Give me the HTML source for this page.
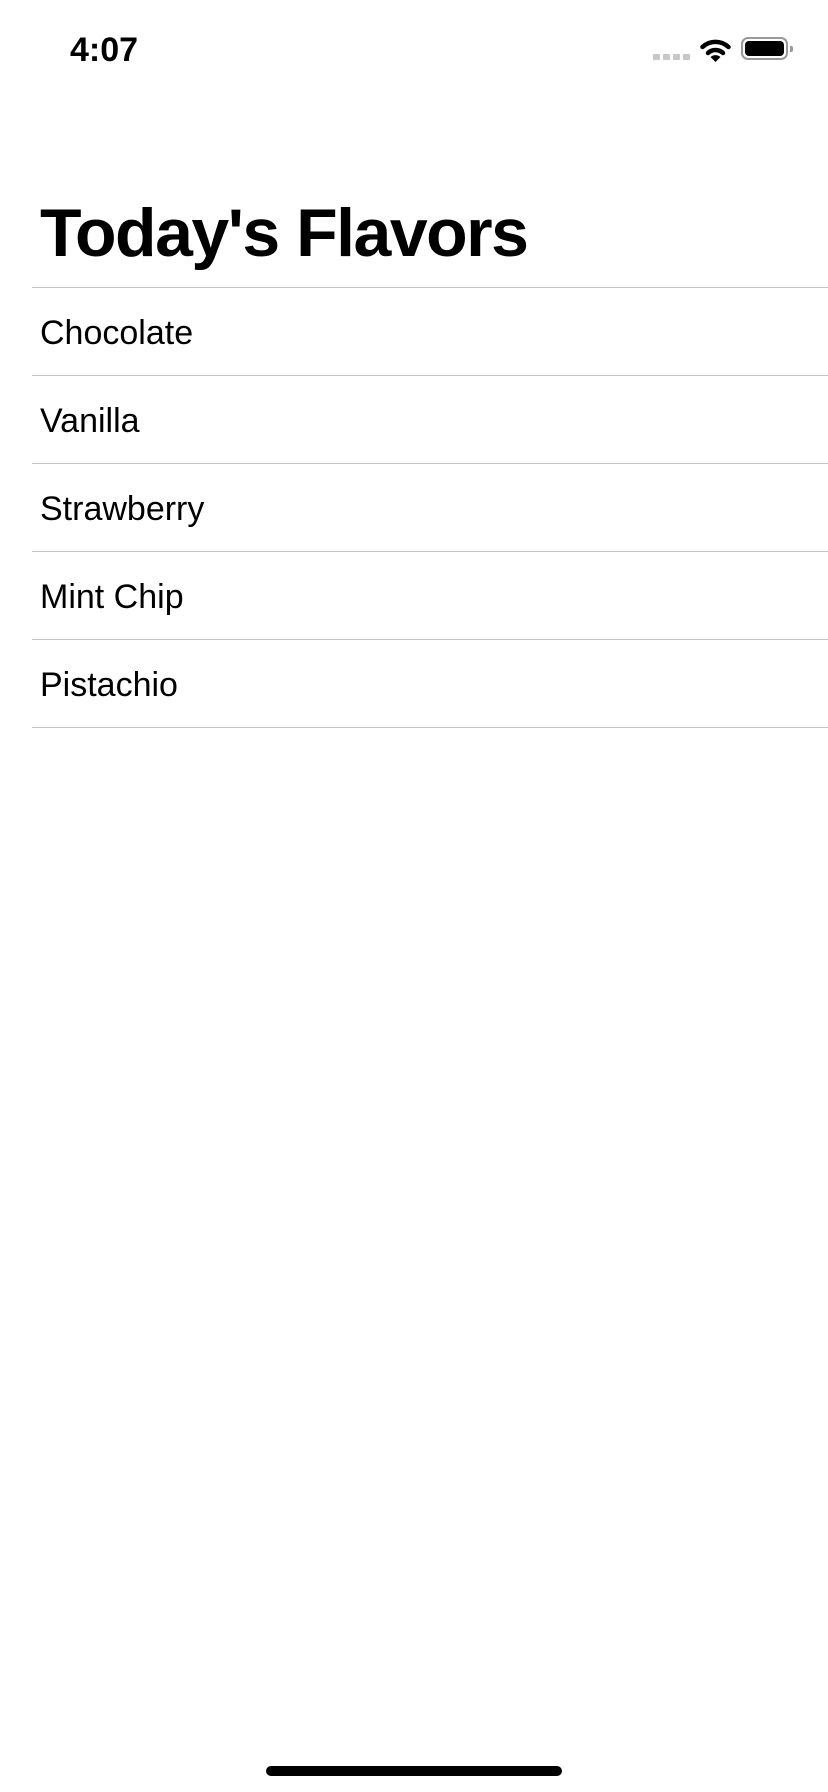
<!DOCTYPE html>
<html><head><meta charset="utf-8"><style>
body{margin:0;width:828px;height:1792px;background:#fff;position:relative;overflow:hidden;font-family:"Liberation Sans",sans-serif;color:#000}
.t{position:absolute;left:70px;top:30px;font-size:34px;font-weight:bold;line-height:40px}
h1{position:absolute;left:40px;top:193px;margin:0;font-size:68px;font-weight:bold;line-height:80px;letter-spacing:-1.5px}
.sep{position:absolute;left:32px;right:0;height:1px;background:#c6c6c8}
.row{position:absolute;left:40px;font-size:34px;line-height:40px}
.dot{position:absolute;top:54px;width:7px;height:6px;background:#c7c7c7;border-radius:1px}
</style></head><body>
<div class="t">4:07</div>
<div class="dot" style="left:653px"></div><div class="dot" style="left:663px"></div><div class="dot" style="left:673px"></div><div class="dot" style="left:683px"></div>
<svg style="position:absolute;left:700px;top:38px" width="31" height="24" viewBox="0 0 31 24">
<path d="M2.5 9 A19 19 0 0 1 28.5 9" stroke="#000" stroke-width="4.5" fill="none" stroke-linecap="round"/>
<path d="M8 15 A11 11 0 0 1 23 15" stroke="#000" stroke-width="4.5" fill="none" stroke-linecap="round"/>
<path d="M10.5 19 L15.5 24 L20.5 19 A7.5 7.5 0 0 0 10.5 19Z" fill="#000"/>
</svg>
<div style="position:absolute;left:741px;top:37px;width:43px;height:19px;border:2px solid #999;border-radius:7px"></div>
<div style="position:absolute;left:745px;top:41px;width:39px;height:15px;background:#000;border-radius:4px"></div>
<div style="position:absolute;left:790px;top:46px;width:3px;height:6px;background:#999;border-radius:0 2px 2px 0"></div>
<h1>Today's Flavors</h1>
<div class="sep" style="top:287px"></div>
<div class="row" style="top:313px">Chocolate</div>
<div class="sep" style="top:375px"></div>
<div class="row" style="top:401px">Vanilla</div>
<div class="sep" style="top:463px"></div>
<div class="row" style="top:489px">Strawberry</div>
<div class="sep" style="top:551px"></div>
<div class="row" style="top:577px">Mint Chip</div>
<div class="sep" style="top:639px"></div>
<div class="row" style="top:665px">Pistachio</div>
<div class="sep" style="top:727px"></div>
<div style="position:absolute;left:266px;top:1766px;width:296px;height:10px;background:#000;border-radius:5px"></div>
</body></html>
